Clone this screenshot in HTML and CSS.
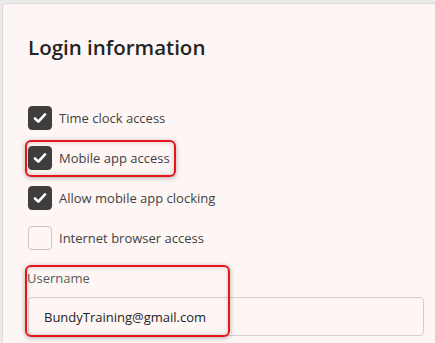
FILE: index.html
```html
<!DOCTYPE html>
<html lang="en">
<head>
    <meta charset="UTF-8">
    <meta name="viewport" content="width=device-width, initial-scale=1.0">
    <title>Login information</title>
    <link rel="stylesheet" href="styles.css">
</head>
<body>
    <div class="card">
        <h2 class="card-title">Login information</h2>

        <div class="checks">
            <label class="check">
                <span class="box checked"><svg viewBox="0 0 24 24"><path d="M6.5 12.5 L10.2 16 L17.5 8"/></svg></span>
                Time clock access
            </label>
            <label class="check">
                <span class="box checked"><svg viewBox="0 0 24 24"><path d="M6.5 12.5 L10.2 16 L17.5 8"/></svg></span>
                Mobile app access
            </label>
            <label class="check">
                <span class="box checked"><svg viewBox="0 0 24 24"><path d="M6.5 12.5 L10.2 16 L17.5 8"/></svg></span>
                Allow mobile app clocking
            </label>
            <label class="check">
                <span class="box"></span>
                Internet browser access
            </label>
        </div>

        <div class="field">
            <div class="field-label">Username</div>
            <div class="input">BundyTraining@gmail.com</div>
        </div>

        <!-- red highlight marks -->
        <div class="mark mark-mobile"></div>
        <div class="mark mark-user"></div>
    </div>
</body>
</html>
```

FILE: styles.css
```css
html, body {
    margin: 0;
    height: 100%;
    overflow: hidden;
}
body {
    background-color: #ebebeb;
    font-family: "Open Sans", "Noto Sans", sans-serif;
    color: #242424;
}
.card {
    position: relative;
    margin: 3px 0 0 2px;
    height: calc(100% - 3px);
    box-sizing: border-box;
    padding: 0 0 0 25px;
    background-color: #fdf6f4;
    border: 1px solid #dedad9;
    border-right: none;
    border-bottom: none;
    border-radius: 5px 0 0 0;
}
.card-title {
    margin: 0;
    padding-top: 29px;
    font-size: 20.5px;
    line-height: 28px;
    font-weight: 600;
    color: #242424;
}
.checks {
    display: flex;
    flex-direction: column;
    gap: 16px;
    margin-top: 45px;
}
.check {
    display: flex;
    align-items: center;
    gap: 7px;
    height: 24px;
    font-size: 13px;
    color: #424242;
}
.box {
    width: 24px;
    height: 24px;
    box-sizing: border-box;
    border: 1px solid #c9c5c4;
    border-radius: 4px;
    background: transparent;
    display: flex;
    align-items: center;
    justify-content: center;
}
.box.checked {
    background-color: #403d3d;
    border-color: #403d3d;
}
.box svg {
    width: 22px;
    height: 22px;
    fill: none;
    stroke: #fff;
    stroke-width: 2.8;
    stroke-linecap: round;
    stroke-linejoin: round;
}
.field {
    margin-top: 19px;
    width: 396px;
}
.field-label {
    font-size: 13px;
    line-height: 18px;
    color: #5c5c5c;
    margin-left: -1px;
}
.input {
    margin-top: 10px;
    height: 39px;
    box-sizing: border-box;
    border: 1px solid #d3d0cf;
    border-radius: 4px;
    padding: 0 15px;
    display: flex;
    align-items: center;
    font-size: 13px;
    color: #242424;
}
.mark {
    position: absolute;
    border: 2px solid #e8141a;
    border-radius: 6px;
    box-shadow: 0 1px 5px rgba(0, 0, 0, 0.3), inset 0 0 5px rgba(0, 0, 0, 0.18);
}
.mark-mobile {
    left: 22px;
    top: 136px;
    width: 147px;
    height: 33px;
}
.mark-user {
    left: 22px;
    top: 261px;
    width: 201px;
    height: 68px;
}
```
